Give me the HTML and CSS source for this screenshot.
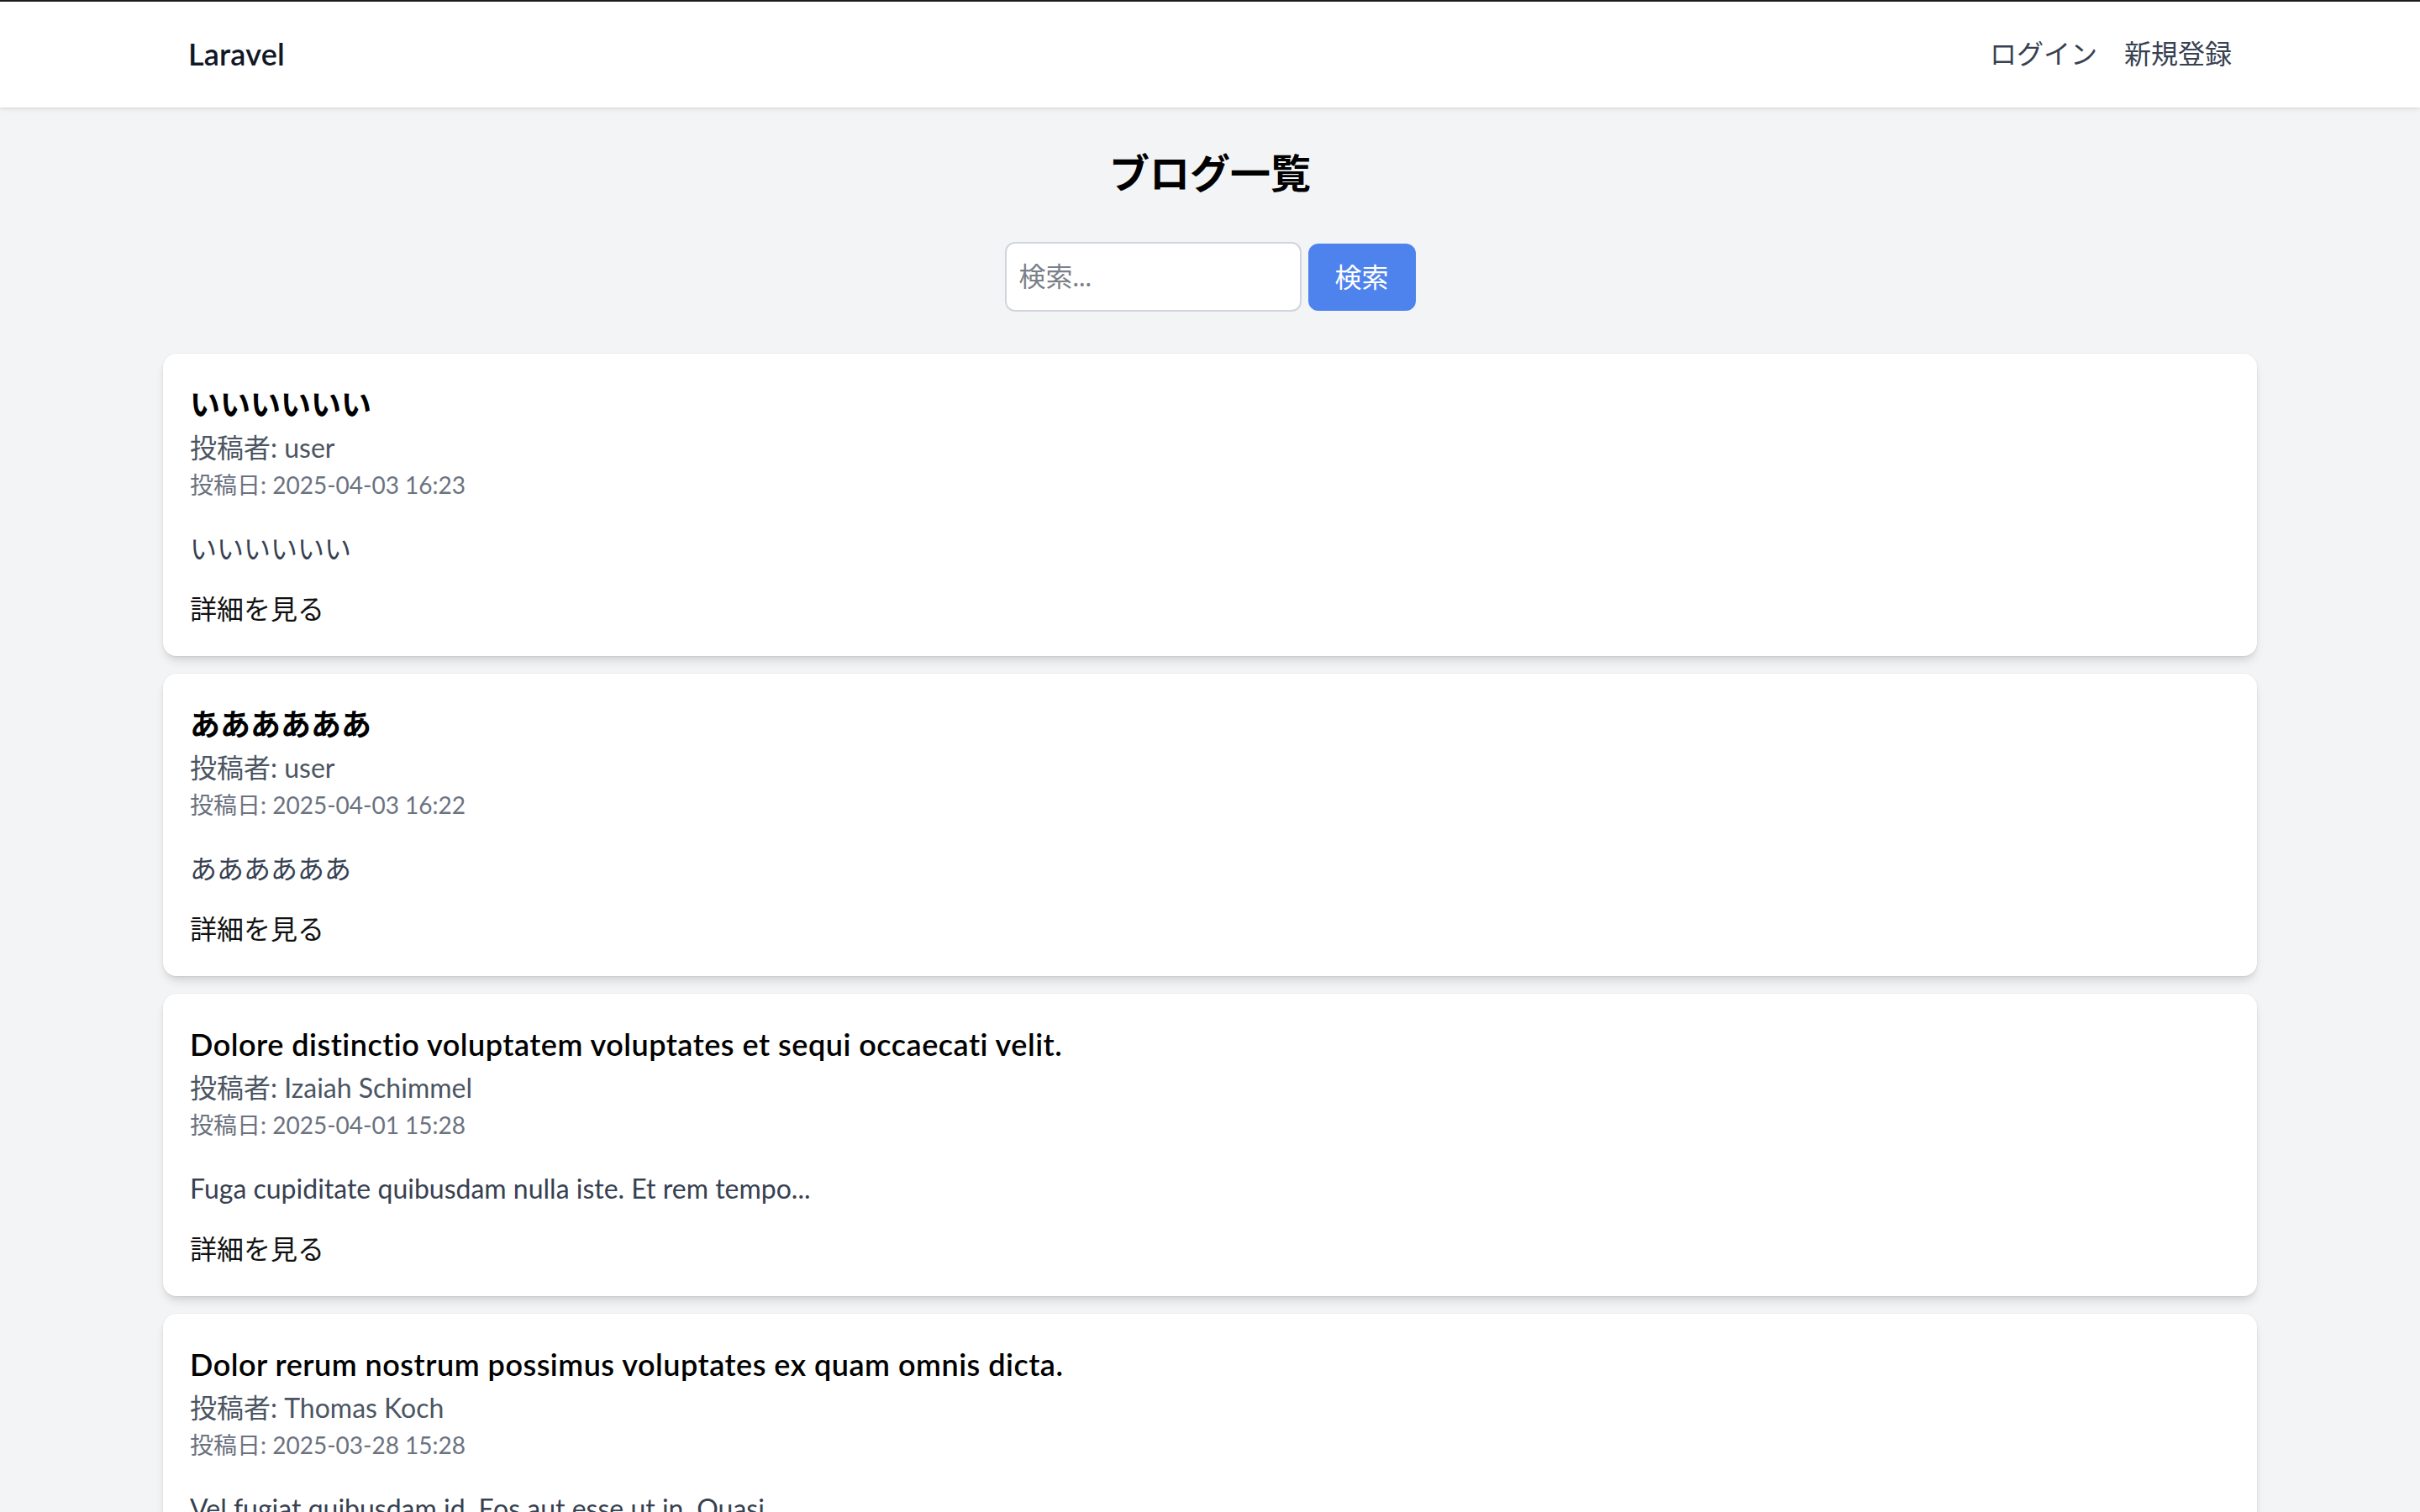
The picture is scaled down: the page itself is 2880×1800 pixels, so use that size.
FILE: index.html
```html
<!DOCTYPE html>
<html lang="ja">
<head>
<meta charset="utf-8">
<title>ブログ一覧</title>
<link rel="stylesheet" href="styles.css">
</head>
<body>
<nav class="nav">
  <div class="nav-inner">
    <a class="brand" href="#">Laravel</a>
    <div class="nav-links">
      <a class="nav-link" href="#">ログイン</a>
      <a class="nav-link" href="#">新規登録</a>
    </div>
  </div>
</nav>

<main class="main">
  <h1 class="page-title">ブログ一覧</h1>

  <form class="search">
    <input class="search-input" type="text" placeholder="検索...">
    <button class="search-btn" type="button">検索</button>
  </form>

  <div class="posts">
    <article class="card">
      <h2 class="card-title">いいいいいい</h2>
      <p class="card-author">投稿者: user</p>
      <p class="card-date">投稿日: 2025-04-03 16:23</p>
      <p class="card-body">いいいいいい</p>
      <a class="card-link" href="#">詳細を見る</a>
    </article>
    <article class="card">
      <h2 class="card-title">ああああああ</h2>
      <p class="card-author">投稿者: user</p>
      <p class="card-date">投稿日: 2025-04-03 16:22</p>
      <p class="card-body">ああああああ</p>
      <a class="card-link" href="#">詳細を見る</a>
    </article>
    <article class="card">
      <h2 class="card-title latin">Dolore distinctio voluptatem voluptates et sequi occaecati velit.</h2>
      <p class="card-author">投稿者: Izaiah Schimmel</p>
      <p class="card-date">投稿日: 2025-04-01 15:28</p>
      <p class="card-body">Fuga cupiditate quibusdam nulla iste. Et rem tempo...</p>
      <a class="card-link" href="#">詳細を見る</a>
    </article>
    <article class="card">
      <h2 class="card-title latin">Dolor rerum nostrum possimus voluptates ex quam omnis dicta.</h2>
      <p class="card-author">投稿者: Thomas Koch</p>
      <p class="card-date">投稿日: 2025-03-28 15:28</p>
      <p class="card-body">Vel fugiat quibusdam id. Eos aut esse ut in. Quasi...</p>
      <a class="card-link" href="#">詳細を見る</a>
    </article>
  </div>
</main>
</body>
</html>
```
FILE: styles.css
```css
html, body {
  margin: 0;
  padding: 0;
}

body {
  background: #f3f4f6;
  font-family: "Lato", "Noto Sans CJK JP", sans-serif;
  color: #111827;
}

a {
  text-decoration: none;
  color: inherit;
}

p, h1, h2 {
  margin: 0;
}

/* ---------- navigation ---------- */
.nav {
  background: #ffffff;
  border-top: 2px solid #1c1c1e;
  box-shadow: 0 2px 6px rgba(0, 0, 0, 0.08), 0 1px 2px rgba(0, 0, 0, 0.06);
  position: relative;
  z-index: 1;
}

.nav-inner {
  max-width: 2560px;
  margin: 0 auto;
  padding: 0 224px;
  height: 126px;
  display: flex;
  align-items: center;
  justify-content: space-between;
}

.brand {
  font-size: 36px;
  line-height: 48px;
  font-weight: 600;
  color: #111827;
  letter-spacing: 0.2px;
  padding-bottom: 2px;
}

.nav-links {
  display: flex;
  gap: 32px;
  padding-bottom: 2px;
}

.nav-link {
  font-size: 32px;
  line-height: 48px;
  color: #374151;
}

/* ---------- main ---------- */
.main {
  width: 2492px;
  margin: 0 auto;
  padding-top: 46px;
  padding-bottom: 48px;
}

.page-title {
  text-align: center;
  font-size: 48px;
  line-height: 64px;
  font-weight: 700;
  color: #000000;
  margin-bottom: 50px;
}

.search {
  display: flex;
  justify-content: center;
  align-items: center;
  gap: 8px;
  margin-bottom: 50px;
}

.search-input {
  box-sizing: border-box;
  width: 353px;
  height: 83px;
  border: 2px solid #d1d5db;
  border-radius: 12px;
  padding: 0 16px 3px 15px;
  font-family: "Lato", "Noto Sans CJK JP", sans-serif;
  font-size: 32px;
  color: #111827;
  background: #ffffff;
  outline: none;
}

.search-input::placeholder {
  color: #7b7f88;
}

.search-btn {
  box-sizing: border-box;
  width: 128px;
  height: 80px;
  border: none;
  border-radius: 12px;
  background: #4e83ee;
  color: #ffffff;
  font-family: "Lato", "Noto Sans CJK JP", sans-serif;
  font-size: 32px;
  padding: 0 0 4px 0;
}

/* ---------- cards ---------- */
.posts {
  display: flex;
  flex-direction: column;
  gap: 21px;
}

.card {
  background: #ffffff;
  border-radius: 16px;
  padding: 32px 32px;
  box-shadow: 0 8px 12px -2px rgba(0, 0, 0, 0.1), 0 4px 8px -4px rgba(0, 0, 0, 0.1), 0 0 0 1px rgba(0, 0, 0, 0.03);
}

.card-title {
  font-size: 36px;
  line-height: 56px;
  font-weight: 700;
  color: #000000;
}

.card-title.latin {
  font-weight: 600;
  letter-spacing: 0.5px;
}

.card-author {
  font-size: 32px;
  line-height: 48px;
  color: #4b5563;
}

.card-date {
  font-size: 28px;
  line-height: 40px;
  color: #6b7280;
}

.card-body {
  margin-top: 32px;
  font-size: 32px;
  line-height: 48px;
  color: #374151;
}

.card-link {
  display: block;
  margin-top: 24px;
  font-size: 32px;
  line-height: 48px;
  color: #111111;
}
```
